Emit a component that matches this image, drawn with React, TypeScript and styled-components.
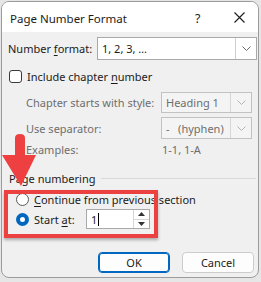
import React from 'react'
import styled, { createGlobalStyle } from 'styled-components'

const GlobalStyle = createGlobalStyle`
  html, body {
    margin: 0;
    padding: 0;
    background: #e6e6e6;
  }
  body {
    font-family: "Noto Sans", "Open Sans", sans-serif;
    font-size: 11px;
    color: #1b1b1b;
  }
`

const Page = styled.div`
  width: 261px;
  height: 282px;
  padding: 1px;
  box-sizing: border-box;
  position: relative;
`

const Frame = styled.div`
  width: 258px;
  height: 277px;
  border: 1px solid #9c9c9c;
  border-radius: 8px;
  overflow: hidden;
  background: #f0f0f0;
  display: flex;
  flex-direction: column;
  box-sizing: border-box;
`

const TitleBar = styled.div`
  height: 30px;
  background: #ffffff;
  display: flex;
  align-items: center;
  padding-left: 8px;
  flex-shrink: 0;
`

const Title = styled.div`
  flex: 1;
  font-size: 11.5px;
  padding-top: 2px;
`

const Help = styled.div`
  width: 12px;
  font-size: 12.5px;
  margin-right: 27px;
  padding-top: 2px;
`

const Close = styled.svg`
  width: 11px;
  height: 11px;
  margin-right: 13px;
`

const Body = styled.div`
  display: flex;
  flex-direction: column;
  padding: 5px 0 0 6px;
`

const Row = styled.div<{ $top?: number; $h: number; $indent?: number }>`
  display: flex;
  align-items: center;
  height: ${p => p.$h}px;
  margin-top: ${p => p.$top ?? 0}px;
  padding-left: ${p => p.$indent ?? 0}px;
`

const Label = styled.div<{ $w?: number; $dim?: boolean }>`
  width: ${p => (p.$w ? `${p.$w}px` : 'auto')};
  flex-shrink: 0;
  white-space: nowrap;
  color: ${p => (p.$dim ? '#6e6e6e' : '#1b1b1b')};
`

const U = styled.span`
  text-decoration: underline;
  text-underline-offset: 2px;
`

const Combo = styled.div<{ $w: number; $h: number; $disabled?: boolean }>`
  width: ${p => p.$w}px;
  height: ${p => p.$h}px;
  box-sizing: border-box;
  border: 1px solid ${p => (p.$disabled ? '#c2c2c2' : '#a9a9a9')};
  background: ${p => (p.$disabled ? '#f4f4f4' : '#ffffff')};
  display: flex;
  align-items: center;
  color: ${p => (p.$disabled ? '#6e6e6e' : '#1b1b1b')};
`

const ComboText = styled.div`
  flex: 1;
  padding-left: 4px;
  white-space: pre;
`

const ComboButton = styled.div<{ $disabled?: boolean }>`
  width: 20px;
  height: 100%;
  border-left: 1px solid ${p => (p.$disabled ? '#d6d6d6' : '#d0d0d0')};
  display: flex;
  align-items: center;
  justify-content: center;
`

const Chevron = ({ color }: { color: string }) => (
  <svg width="9" height="5" viewBox="0 0 9 5">
    <path d="M0.5 0.5 L4.5 4.5 L8.5 0.5" fill="none" stroke={color} strokeWidth="1" />
  </svg>
)

const CheckBox = styled.div`
  width: 13px;
  height: 13px;
  box-sizing: border-box;
  border: 1px solid #3a3a3a;
  border-radius: 3px;
  background: #fff;
  margin: 0 5px 0 1px;
`

const Section = styled.div`
  display: flex;
  align-items: center;
  height: 14px;
  margin-top: 15px;
  margin-left: 1px;
  &::after {
    content: '';
    flex: 1;
    height: 1px;
    background: #d9d9d9;
    margin: 0 2px 0 6px;
  }
`

// the red annotation frame is drawn over the radio group
const RadioGroup = styled.div`
  position: relative;
  display: flex;
  flex-direction: column;
  gap: 3px;
  margin-top: 7px;
  padding-left: 8px;
  &::after {
    content: '';
    position: absolute;
    left: -4px;
    top: -2px;
    width: 154px;
    height: 48px;
    box-sizing: border-box;
    border: 4px solid #ec4141;
    box-shadow: 0 2px 3px rgba(0, 0, 0, 0.3);
    pointer-events: none;
  }
`

const RadioRow = styled.div<{ $h: number }>`
  display: flex;
  align-items: center;
  height: ${p => p.$h}px;
`

const Radio = styled.div<{ $on?: boolean }>`
  width: 13px;
  height: 13px;
  border-radius: 50%;
  box-sizing: border-box;
  margin-right: 5px;
  flex-shrink: 0;
  border: ${p => (p.$on ? '4px solid #0067c0' : '1px solid #5a5a5a')};
  background: #fff;
`

const Spin = styled.div`
  width: 64px;
  height: 20px;
  box-sizing: border-box;
  border: 1px solid #a9a9a9;
  background: #fff;
  display: flex;
  align-items: center;
`

const SpinValue = styled.div`
  flex: 1;
  padding-left: 4px;
  display: flex;
  align-items: center;
  &::after {
    content: '';
    width: 1px;
    height: 13px;
    background: #000;
    margin-left: 1px;
  }
`

const SpinButtons = styled.div`
  width: 15px;
  height: 100%;
  display: flex;
  flex-direction: column;
  border-left: 1px solid #d6d6d6;
`

const SpinHalf = styled.div<{ $bottom?: boolean }>`
  flex: 1;
  display: flex;
  align-items: center;
  justify-content: center;
  border-top: ${p => (p.$bottom ? '1px solid #d6d6d6' : 'none')};
`

const Buttons = styled.div`
  display: flex;
  justify-content: flex-end;
  gap: 12px;
  margin-top: 23px;
  padding-right: 4px;
`

const Button = styled.div<{ $primary?: boolean }>`
  width: 72px;
  height: 21px;
  box-sizing: border-box;
  border: 1px solid ${p => (p.$primary ? '#0067c0' : '#cccccc')};
  border-radius: 4px;
  background: #fdfdfd;
  display: flex;
  align-items: center;
  justify-content: center;
  box-shadow: ${p => (p.$primary ? 'inset 0 0 0 1px #0067c0' : 'none')};
`

const Arrow = styled.svg`
  position: absolute;
  left: 1px;
  top: 133px;
`

export default function App() {
  return (
    <Page>
      <GlobalStyle />
      <Frame>
        <TitleBar>
          <Title>Page Number Format</Title>
          <Help>?</Help>
          <Close viewBox="0 0 11 11">
            <path d="M0.5 0.5 L10.5 10.5 M10.5 0.5 L0.5 10.5" stroke="#1b1b1b" strokeWidth="1.1" />
          </Close>
        </TitleBar>
        <Body>
          <Row $h={23}>
            <Label $w={89}>
              Number <U>f</U>ormat:
            </Label>
            <Combo $w={160} $h={23}>
              <ComboText>1, 2, 3, …</ComboText>
              <ComboButton>
                <Chevron color="#6a6a6a" />
              </ComboButton>
            </Combo>
          </Row>
          <Row $top={9} $h={14}>
            <CheckBox />
            <Label>
              Include chapter <U>n</U>umber
            </Label>
          </Row>
          <Row $top={9} $h={21} $indent={18}>
            <Label $w={135} $dim>
              Chapter starts with style:
            </Label>
            <Combo $w={91} $h={21} $disabled>
              <ComboText>Heading 1</ComboText>
              <ComboButton $disabled>
                <Chevron color="#b5b5b5" />
              </ComboButton>
            </Combo>
          </Row>
          <Row $top={4} $h={22} $indent={18}>
            <Label $w={135} $dim>
              Use separator:
            </Label>
            <Combo $w={91} $h={22} $disabled>
              <ComboText>-   (hyphen)</ComboText>
              <ComboButton $disabled>
                <Chevron color="#b5b5b5" />
              </ComboButton>
            </Combo>
          </Row>
          <Row $top={3} $h={14} $indent={18}>
            <Label $w={136} $dim>
              Examples:
            </Label>
            <Label $dim>1-1, 1-A</Label>
          </Row>
          <Section>Page numbering</Section>
          <RadioGroup>
            <RadioRow $h={14}>
              <Radio />
              <Label>
                <U>C</U>ontinue from previous section
              </Label>
            </RadioRow>
            <RadioRow $h={20}>
              <Radio $on />
              <Label $w={52}>
                Start <U>a</U>t:
              </Label>
              <Spin>
                <SpinValue>1</SpinValue>
                <SpinButtons>
                  <SpinHalf>
                    <svg width="7" height="4" viewBox="0 0 7 4">
                      <path d="M0 4 L3.5 0 L7 4 Z" fill="#333" />
                    </svg>
                  </SpinHalf>
                  <SpinHalf $bottom>
                    <svg width="7" height="4" viewBox="0 0 7 4">
                      <path d="M0 0 L3.5 4 L7 0 Z" fill="#333" />
                    </svg>
                  </SpinHalf>
                </SpinButtons>
              </Spin>
            </RadioRow>
          </RadioGroup>
          <Buttons>
            <Button $primary>OK</Button>
            <Button>Cancel</Button>
          </Buttons>
        </Body>
      </Frame>
      <Arrow width="36" height="54" viewBox="0 0 36 54">
        <path
          d="M14 5 Q14 1 19 1 Q24 1 24 5 L24 22 L35 22 L20 53 L1 22 L14 22 Z"
          fill="#ee4040"
        />
      </Arrow>
    </Page>
  )
}
